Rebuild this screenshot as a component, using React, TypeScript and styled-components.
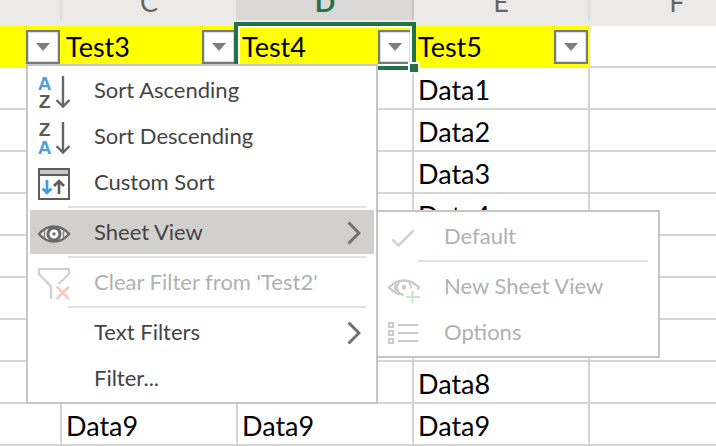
import React from "react";
import styled, { createGlobalStyle, css } from "styled-components";

const Global = createGlobalStyle`
  *, *::before, *::after { box-sizing: border-box; }
  body { margin: 0; background: #fff; font-family: Lato, "Open Sans", sans-serif; }
`;

const Page = styled.main`
  position: relative;
  overflow: hidden;
`;

const Grid = styled.table`
  table-layout: fixed;
  width: 100%;
  min-width: 766px;
  border-spacing: 0;
  color: #000;
  font-size: 27px;
  line-height: 32px;
`;

const Col = styled.col<{ $w?: number }>`
  width: ${(p) => (p.$w ? `${p.$w}px` : "auto")};
`;

const ColumnHead = styled.th`
  height: 26px;
  padding: 0;
  background: #ebeae9;
  color: #646464;
  font-weight: 400;
`;

const ColumnLabel = styled.div<{ $active?: boolean }>`
  display: flex;
  height: 20px;
  margin-bottom: 6px;
  padding-bottom: 2px;
  align-items: flex-end;
  justify-content: center;
  border-right: 2px solid #dcdbda;
  ${(p) =>
    p.$active &&
    css`
      background: #d9d8d7;
      border-right-color: #c3c2c1;
      color: #217346;
      font-weight: 700;
    `}
`;

const Cell = styled.td`
  height: 42px;
  padding: 4px 4px 0;
  border-right: 2px solid #d4d4d4;
  border-bottom: 2px solid #d4d4d4;
`;

const FilterHead = styled.th`
  position: relative;
  height: 42px;
  padding: 0;
  background: #ff0;
  font-weight: 400;
  text-align: left;
`;

const FilterHeadContent = styled.div`
  display: flex;
  height: 42px;
  padding: 4px 2px 4px 4px;
  align-items: center;
  justify-content: space-between;
`;

const DropButton = styled.button`
  display: grid;
  width: 34px;
  height: 34px;
  margin-left: auto;
  padding: 0;
  place-items: center;
  border: 2px solid #7a7a7a;
  background: #fff;
  box-shadow: inset 0 0 0 1px #dcdcdc;
`;

const Selection = styled.div`
  position: absolute;
  z-index: 1;
  inset: -4px -2px -2px -4px;
  border: 4px solid #217346;
  box-shadow: inset 0 0 0 2px #fff;
  pointer-events: none;
`;

const FillHandle = styled.span`
  position: absolute;
  right: -6px;
  bottom: -6px;
  width: 8px;
  height: 8px;
  background: #217346;
  box-shadow: 0 0 0 2px #fff;
`;

const MenuPanel = styled.ul`
  position: absolute;
  z-index: 2;
  display: flex;
  flex-direction: column;
  gap: 2px;
  margin: 0;
  padding: 2px;
  border: 2px solid #c6c6c6;
  background: #fff;
  list-style: none;
`;

const FilterMenu = styled(MenuPanel)`
  top: 64px;
  left: 26px;
  width: 352px;
`;

const SubMenu = styled(MenuPanel)`
  top: 0;
  left: calc(100% + 2px);
  width: 284px;
`;

const MenuEntry = styled.li`
  position: relative;
`;

const MenuButton = styled.button<{ $active?: boolean }>`
  display: grid;
  grid-template-columns: 32px 1fr 14px;
  column-gap: 24px;
  width: 100%;
  height: 44px;
  padding: 0 13px 0 8px;
  border: 0;
  background: ${(p) => (p.$active ? "#d2d0ce" : "transparent")};
  color: #444;
  font: 22px/44px Lato, "Open Sans", sans-serif;
  text-align: left;
  white-space: nowrap;

  &:disabled {
    color: #b1b1b1;
  }
`;

const IconSlot = styled.span`
  display: flex;
  padding-top: 8px;
`;

const ChevronSlot = styled.span`
  display: flex;
  padding-top: 11px;
`;

const Divider = styled.li`
  height: 2px;
  margin: 0 8px 0 38px;
  background: #e1e1e1;
`;

const Icon = ({ children }: { children: React.ReactNode }) => (
  <svg width="32" height="32" viewBox="0 0 32 32" fill="none" overflow="visible" aria-hidden="true">
    {children}
  </svg>
);

const Letter = styled.text`
  font: 700 19px "Liberation Sans", sans-serif;
`;

const SortIcon = ({ top, bottom }: { top: string; bottom: string }) => (
  <Icon>
    {[top, bottom].map((l, i) => (
      <Letter key={l} x="6.5" y={i ? 32 : 14} textAnchor="middle" fill={l === "A" ? "#4a9fdc" : "#5a5a5a"}>
        {l}
      </Letter>
    ))}
    <path d="M25 0v30.5M18.5 24l6.5 6.5 6.5-6.5" stroke="#666" strokeWidth="2.400" />
  </Icon>
);

const CustomSortIcon = () => (
  <Icon>
    <path d="M1 1h30v30H1z" fill="#fafafa" />
    <path d="M2 2h28v5H2z" fill="#c8c8c8" />
    <path d="M1 1h30v30H1zM1 7h30" stroke="#5c5c5c" strokeWidth="2" />
    <path d="M9 12v13M4.500 20.500 9 25l4.500-4.500" stroke="#3c9be0" strokeWidth="2.600" />
    <path d="M21 26V13M16 18l5-5 5 5" stroke="#5c5c5c" strokeWidth="2.600" />
  </Icon>
);

const EyeIcon = () => (
  <Icon>
    <path d="M1 16C6 10 11 8.500 16 8.500S26 10 31 16C26 22 21 23.500 16 23.500S6 22 1 16Z" fill="#eee" stroke="#6a6a6a" strokeWidth="2.400" />
    <circle cx="16" cy="16" r="6" fill="#fff" stroke="#6a6a6a" strokeWidth="3" />
    <circle cx="16" cy="16" r="1.800" fill="#777" />
    <path d="M6.500 12v8M25.500 12v8" stroke="#888" strokeWidth="1.500" />
  </Icon>
);

const ClearFilterIcon = () => (
  <Icon>
    <path d="M13 31V18.500L1 6V1h30v5L20.500 16" stroke="#cfcfcf" strokeWidth="2.200" />
    <path d="M18.500 18.500 31 31M31 18.500 18.500 31" stroke="#f9c9c6" strokeWidth="2.600" />
  </Icon>
);

const CheckIcon = () => (
  <Icon>
    <path d="M4.500 17.500 10.500 23.500 25.500 8.500" stroke="#d2d2d2" strokeWidth="2.600" />
  </Icon>
);

const NewViewIcon = () => (
  <Icon>
    <path d="M15.500 22.500C10 22.500 5 20 1 15.500 6 10 11 8.500 16 8.500S26 10 31 15.500L29.500 17.500" stroke="#cbcbcb" strokeWidth="2.400" />
    <path d="M11 10.500c-3 4-2.500 8 1.500 11.500M21 10.500c1.500 2 2.200 4 2 6M8 12c-1.500 2.500-1.500 4.500 0 7" stroke="#cbcbcb" strokeWidth="2" />
    <circle cx="16" cy="15.500" r="2.400" fill="#cbcbcb" />
    <path d="M24.500 18.500v13M18 25h14" stroke="#c4e8ce" strokeWidth="2" />
  </Icon>
);

const OptionsIcon = () => (
  <Icon>
    {[7, 15, 23].map((y) => (
      <path key={y} d={`M1 ${y - 2}h4v4H1zM10 ${y}h20`} stroke="#cbcbcb" strokeWidth="2" />
    ))}
  </Icon>
);

const Chevron = () => (
  <svg width="14" height="24" viewBox="0 0 14 24" fill="none" aria-hidden="true">
    <path d="M1.500 1.500 12 12 1.500 22.500" stroke="#707070" strokeWidth="3" />
  </svg>
);

type ItemProps = {
  label: string;
  icon?: React.ReactNode;
  active?: boolean;
  disabled?: boolean;
  expandable?: boolean;
  children?: React.ReactNode;
};

const MenuItem = ({ label, icon, active, disabled, expandable, children }: ItemProps) => (
  <MenuEntry role="none">
    <MenuButton role="menuitem" type="button" $active={active} disabled={disabled} aria-haspopup={expandable}>
      <IconSlot>{icon}</IconSlot>
      <span>{label}</span>
      {expandable && (
        <ChevronSlot>
          <Chevron />
        </ChevronSlot>
      )}
    </MenuButton>
    {children}
  </MenuEntry>
);

const columns = ["", "C", "D", "E", "F"];
const headers = ["", "Test3", "Test4", "Test5"];
const rows = [
  ["", "", "", "Data1", ""],
  ["", "", "", "Data2", ""],
  ["", "", "", "Data3", ""],
  ["", "", "", "Data4", ""],
  ["", "", "", "", ""],
  ["", "", "", "", ""],
  ["", "", "", "", ""],
  ["", "", "", "Data8", ""],
  ["", "Data9", "Data9", "Data9", ""],
];

export default function App() {
  return (
    <Page>
      <Global />
      <Grid>
        <colgroup>
          <Col $w={62} />
          <Col $w={176} />
          <Col $w={176} />
          <Col $w={176} />
          <Col />
        </colgroup>
        <thead>
          <tr>
            {columns.map((c) => (
              <ColumnHead key={c} scope="col">
                <ColumnLabel $active={c === "D"}>{c}</ColumnLabel>
              </ColumnHead>
            ))}
          </tr>
        </thead>
        <tbody>
          <tr>
            {headers.map((h) => (
              <FilterHead key={h} scope="col">
                <FilterHeadContent>
                  {h}
                  <DropButton type="button" aria-label={`Filter ${h}`}>
                    <svg width="16" height="10" viewBox="0 0 16 10" aria-hidden="true">
                      <path d="M1 1h14L8 9z" fill="#7c7c7c" />
                    </svg>
                  </DropButton>
                </FilterHeadContent>
                {h === "Test4" && (
                  <Selection>
                    <FillHandle />
                  </Selection>
                )}
              </FilterHead>
            ))}
            <Cell />
          </tr>
          {rows.map((row, r) => (
            <tr key={r}>
              {row.map((value, c) => (
                <Cell key={c}>{value}</Cell>
              ))}
            </tr>
          ))}
        </tbody>
      </Grid>
      <FilterMenu role="menu">
        <MenuItem label="Sort Ascending" icon={<SortIcon top="A" bottom="Z" />} />
        <MenuItem label="Sort Descending" icon={<SortIcon top="Z" bottom="A" />} />
        <MenuItem label="Custom Sort" icon={<CustomSortIcon />} />
        <Divider role="separator" />
        <MenuItem label="Sheet View" icon={<EyeIcon />} active expandable>
          <SubMenu role="menu">
            <MenuItem label="Default" icon={<CheckIcon />} disabled />
            <Divider role="separator" />
            <MenuItem label="New Sheet View" icon={<NewViewIcon />} disabled />
            <MenuItem label="Options" icon={<OptionsIcon />} disabled />
          </SubMenu>
        </MenuItem>
        <Divider role="separator" />
        <MenuItem label="Clear Filter from 'Test2'" icon={<ClearFilterIcon />} disabled />
        <Divider role="separator" />
        <MenuItem label="Text Filters" expandable />
        <MenuItem label="Filter..." />
      </FilterMenu>
    </Page>
  );
}
